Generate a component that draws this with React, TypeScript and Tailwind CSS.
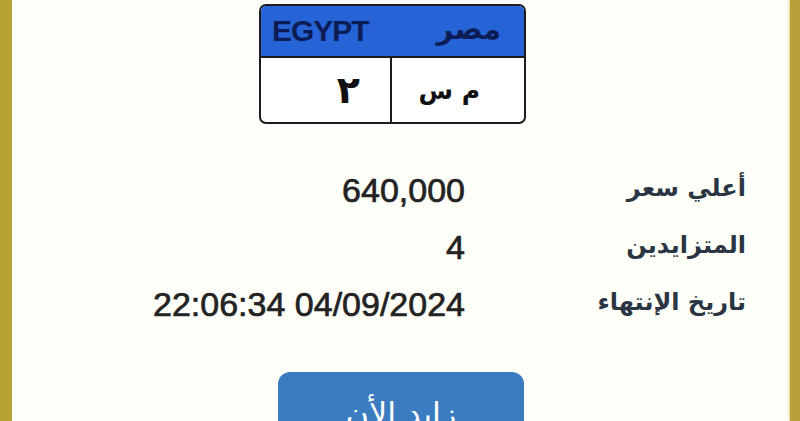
const arabic = { fontFamily: '"DejaVu Sans", sans-serif' };

function Plate() {
    return (
        <section className="shrink-0 ml-[247px] w-[267px] h-[120px] rounded-[7px] border-2 border-[#1c1c1c] overflow-hidden flex flex-col bg-white">
            <header className="shrink-0 h-[52px] bg-[#2563d6] border-b-2 border-[#1c1c1c] flex items-center justify-between px-[11px]">
                <span className="font-['Liberation_Sans',sans-serif] font-bold text-[30px] text-[#0c1d55] tracking-[-1px] leading-none">EGYPT</span>
                <span dir="rtl" style={arabic} className="font-bold text-[29px] text-[#0c1d55] leading-none mr-[12px] -mt-[4px]">مصر</span>
            </header>
            <div className="flex-1 flex">
                <div className="w-[131px] border-r-2 border-[#1c1c1c] flex items-center justify-end pr-[30px]">
                    <span style={arabic} className="font-bold text-[38px] text-[#111] leading-none">٢</span>
                </div>
                <div className="flex-1 flex items-center justify-end pr-[44px]">
                    <span dir="rtl" style={arabic} className="font-bold text-[25px] text-[#111] leading-none">م س</span>
                </div>
            </div>
        </section>
    );
}

const rows = [
    { label: "أعلي سعر", value: "640,000" },
    { label: "المتزايدين", value: "4" },
    { label: "تاريخ الإنتهاء", value: "22:06:34 04/09/2024" },
];

export default function App() {
    return (
        <main className="w-[800px] h-[421px] overflow-hidden flex bg-white">
            <div className="shrink-0 w-[12px] h-full bg-[#b8a231] shadow-[1px_0_2px_#d8cf8a]" />
            <div className="flex-1 h-full bg-[#fffffa] flex flex-col pt-[4px]">
                <Plate />
                <div className="shrink-0 mt-[37px] flex flex-col">
                    {rows.map((row) => (
                        <div key={row.label} className="shrink-0 h-[57px] flex items-center">
                            <div className="w-[453px] text-right font-['Liberation_Sans',sans-serif] text-[34px] text-[#232323] leading-none [-webkit-text-stroke:0.7px_#232323]">
                                {row.value}
                            </div>
                            <div className="w-[281px] text-right -mt-[4px]">
                                <span dir="rtl" style={arabic} className="font-bold text-[24px] text-[#2b3644]">{row.label}</span>
                            </div>
                        </div>
                    ))}
                </div>
                <div className="shrink-0 mt-[40px] ml-[266px] w-[246px] h-[70px] rounded-[12px] bg-[#3b7cc0] flex justify-center pt-[26px]">
                    <span dir="rtl" style={arabic} className="text-[32px] text-white leading-none">زايد الأن</span>
                </div>
            </div>
            <div className="shrink-0 w-[10px] h-full bg-[#b9a03c] shadow-[-1px_0_2px_#d8cf8a]" />
        </main>
    );
}
